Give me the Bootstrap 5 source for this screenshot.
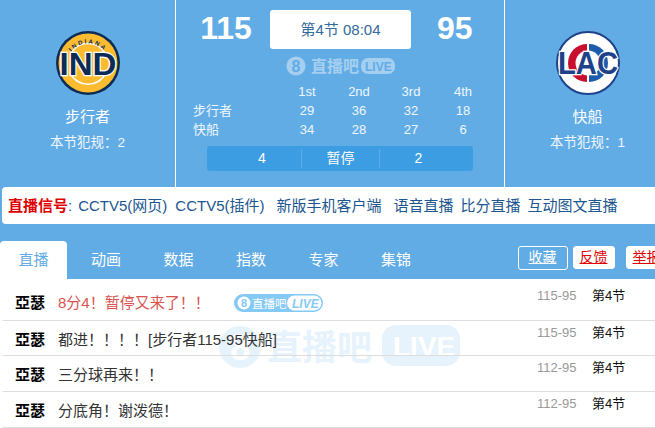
<!DOCTYPE html>
<html lang="zh">
<head>
<meta charset="utf-8">
<title>直播</title>
<link href="https://cdn.jsdelivr.net/npm/bootstrap@5.3.0/dist/css/bootstrap.min.css" rel="stylesheet">
<style>
html,body{width:655px;height:428px;overflow:hidden;margin:0;background:#fff}
body{font-family:"Liberation Sans","Noto Sans CJK SC",sans-serif;font-size:14px;line-height:1.2;color:#333}
.page-wrap{width:680px}
.top-blue{background:#62ace6}
.score-head{height:187px}
.side-team{width:175px;flex:none;color:#fff;padding-top:31px}
.side-team.away{width:165px}
.team-logo{display:block;width:64px;height:64px;margin:0 auto;overflow:visible}
.logo-letters{paint-order:stroke;stroke:#fff;stroke-width:2.4px;stroke-linejoin:miter}
.team-name{font-size:15px;line-height:18px;margin-top:13px}
.team-foul{font-size:13.5px;line-height:16px;margin-top:9px;color:#eef7ff}
.mid-panel{width:330px;flex:none;border-left:1px solid #fff;border-right:1px solid #fff;color:#fff}
.score-line{height:49px;padding-top:10px}
.big-num{font-size:32px;font-weight:700;line-height:36px;text-align:center}
.big-a{width:94px;padding-left:6px}
.big-b{width:62px;margin-left:26px;padding-left:0;flex:none;text-align:left}
.clock-box{width:141px;height:39px;background:#fff;border-radius:3px;color:#33699b;font-size:15px;line-height:39px;text-align:center}
.mark-small{display:block;width:110px;height:20px;margin:7px 0 0 110px;overflow:visible}
.quarter-grid{display:grid;grid-template-columns:88px 52px 52px 52px 52px;font-size:13px;line-height:19px;margin:6px 0 0 17px;color:#eef7ff}
.quarter-grid>span{text-align:center}
.quarter-grid>span.row-label{text-align:left}
.timeout-bar{width:266px;height:25px;margin:7px 0 0 31px;padding:3px 16px;background:#3d9de2;border-radius:3px;font-size:14px;line-height:19px}
.timeout-bar>span{width:78px;text-align:center}
.timeout-bar>span+span{border-left:1px solid #5aaee8}
.signal-strip{height:37px;margin-left:2px;background:#fff;border-radius:4px 0 0 4px;padding-left:6px;font-size:15px;line-height:37px;white-space:nowrap}
.signal-strip b{color:#e00000}
.signal-strip a{color:#20568f;text-decoration:none;margin-right:7px}
.signal-strip a.wide-gap{margin-right:12px}
.signal-strip a.first-link{margin-right:8px}
.signal-colon{color:#20568f;margin-right:6px}
.tab-row{height:55px;padding-top:17px}
.tab-cell{width:67px;height:38px;margin-right:5.5px;color:#fff;font-size:15px;line-height:38px;text-align:center;border-radius:4px 4px 0 0;flex:none}
.tab-cell.is-active{background:#fff;color:#62ace6}
.action-zone{margin-left:82.5px;padding-top:5px;gap:5px}
.tab-btn{display:block;flex:none;height:23px;line-height:21px;font-size:14px;border-radius:3px;text-align:center}
.tab-btn.ghost{width:50px;border:1px solid #fff;color:#fff;height:24px}
.tab-btn.solid{width:42px;background:#fff;color:#e00000;border:1px solid #fff}
.tab-btn.last-btn{margin-left:6px}
.feed-wrap{position:relative}
.feed-mark{position:absolute;left:218px;top:46px;width:244px;height:44px;z-index:0;overflow:visible}
.feed-row{position:relative;z-index:1;margin-left:3px;border-bottom:1px solid #ddd;height:36px;padding-left:12px;display:flex}
.feed-row.first-row{height:42px;padding-top:5px}
.feed-row.second-row{height:35px}
.feed-name{width:43px;font-size:15px;font-weight:700;color:#000;line-height:38px}
.feed-msg{width:479px;font-size:15px;line-height:38px;height:38px;color:#333;display:flex;align-items:center}
.feed-msg.is-hot{color:#d9534f}
.feed-score{width:55px;font-size:13px;color:#999;line-height:24px}
.feed-per{font-size:13px;color:#111;line-height:24px}
.feed-badge{width:89px;height:20px;margin-left:24px;flex:none}
</style>
</head>
<body>
<div class="page-wrap">
  <div class="top-blue">
    <div class="score-head d-flex">
      <div class="side-team text-center">
        <svg class="team-logo" viewBox="0 0 64 64">
          <defs><path id="ind-arc" d="M12 27A21 21 0 0 1 52 27"/></defs>
          <circle cx="32" cy="32" r="32" fill="#0c2c56"/>
          <circle cx="32" cy="32" r="29.5" fill="#fdbb30"/>
          <path d="M14 42A20 20 0 0 0 50 42" fill="none" stroke="#fff" stroke-width="1.6"/>
          <path d="M15 22A20 20 0 0 1 49 22" fill="none" stroke="#fff" stroke-width="1.6"/>
          <text font-family="Liberation Sans" font-size="6" font-weight="700" fill="#0c2c56" letter-spacing="1.9"><textPath href="#ind-arc" startOffset="7">INDIANA</textPath></text>
          <text class="logo-letters" x="32" y="44" text-anchor="middle" font-family="Liberation Sans" font-size="31" font-weight="700" fill="#0c2c56" textLength="57" lengthAdjust="spacingAndGlyphs">IND</text>
        </svg>
        <div class="team-name">步行者</div>
        <div class="team-foul">本节犯规：2</div>
      </div>
      <div class="mid-panel">
        <div class="score-line d-flex">
          <div class="big-num big-a">115</div>
          <div class="clock-box">第4节 08:04</div>
          <div class="big-num big-b">95</div>
        </div>
        <svg class="mark-small" viewBox="0 0 110 20">
          <g opacity=".42" fill="#fff">
            <circle cx="10" cy="10" r="9.5"/>
            <text x="10" y="15.5" text-anchor="middle" font-family="Liberation Sans" font-size="16" font-weight="700" fill="#62ace6">8</text>
            <text x="25" y="15.5" font-family="Noto Sans CJK SC" font-size="16" font-weight="700">直播吧</text>
            <rect x="75" y="2" width="34" height="16" rx="7"/>
            <text x="79" y="14.5" font-family="Liberation Sans" font-size="12" font-weight="700" fill="#62ace6">LIVE</text>
          </g>
        </svg>
        <div class="quarter-grid">
          <span></span><span>1st</span><span>2nd</span><span>3rd</span><span>4th</span>
          <span class="row-label">步行者</span><span>29</span><span>36</span><span>32</span><span>18</span>
          <span class="row-label">快船</span><span>34</span><span>28</span><span>27</span><span>6</span>
        </div>
        <div class="timeout-bar d-flex">
          <span>4</span><span>暂停</span><span>2</span>
        </div>
      </div>
      <div class="side-team away text-center">
        <svg class="team-logo" viewBox="0 0 64 64">
          <circle cx="32" cy="32" r="31" fill="#fff" stroke="#1d428a" stroke-width="2"/>
          <path d="M31 13a19 19 0 0 0 0 38Z" fill="#c8102e"/>
          <path d="M33 13a19 19 0 0 1 0 38Z" fill="#1d5cab"/>
          <circle cx="32" cy="32" r="12.5" fill="#fff"/>
          <text class="logo-letters" x="32" y="43" text-anchor="middle" font-family="Liberation Sans" font-size="31" font-weight="700" fill="#1d428a" textLength="60" lengthAdjust="spacingAndGlyphs">LAC</text>
        </svg>
        <div class="team-name">快船</div>
        <div class="team-foul">本节犯规：1</div>
      </div>
    </div>
    <div class="signal-strip">
      <b>直播信号</b><span class="signal-colon">:</span><a href="#" class="first-link">CCTV5(网页)</a><a href="#" class="wide-gap">CCTV5(插件)</a><a href="#" class="wide-gap">新版手机客户端</a><a href="#">语音直播</a><a href="#">比分直播</a><a href="#">互动图文直播</a>
    </div>
    <div class="tab-row d-flex">
      <div class="tab-cell is-active">直播</div>
      <div class="tab-cell">动画</div>
      <div class="tab-cell">数据</div>
      <div class="tab-cell">指数</div>
      <div class="tab-cell">专家</div>
      <div class="tab-cell">集锦</div>
      <div class="action-zone d-flex">
        <a class="tab-btn ghost">收藏</a>
        <a class="tab-btn solid">反馈</a>
        <a class="tab-btn solid last-btn">举报</a>
      </div>
    </div>
  </div>
  <div class="feed-wrap">
    <svg class="feed-mark" viewBox="0 0 244 44">
      <g fill="#e7f3fc">
        <circle cx="22" cy="22" r="21"/>
        <text x="22" y="35" text-anchor="middle" font-family="Liberation Sans" font-size="36" font-weight="700" fill="#fff">8</text>
        <text x="49" y="35" font-family="Noto Sans CJK SC" font-size="35" font-weight="700">直播吧</text>
        <rect x="164" y="0" width="78" height="41" rx="14"/>
        <text x="175" y="31" font-family="Liberation Sans" font-size="28" font-weight="700" fill="#fff">LIVE</text>
      </g>
    </svg>
    <div class="feed-row first-row">
      <div class="feed-name">亞瑟</div>
      <div class="feed-msg is-hot">8分4！暂停又来了！！<svg class="feed-badge" viewBox="0 0 89 20">
          <rect x="0" y="1" width="89" height="18" rx="9" fill="#85c9f5"/>
          <circle cx="10" cy="10" r="6.5" fill="#fff"/>
          <text x="10" y="14" text-anchor="middle" font-family="Liberation Sans" font-size="11" font-weight="700" fill="#85c9f5">8</text>
          <text x="18" y="14.5" font-family="Noto Sans CJK SC" font-size="11.5" fill="#fff">直播吧</text>
          <rect x="53" y="2.5" width="34.5" height="15" rx="7.5" fill="#fff"/>
          <text x="58" y="14.5" font-family="Liberation Sans" font-size="12" font-weight="700" font-style="italic" fill="#85c9f5">LIVE</text>
        </svg></div>
      <div class="feed-score">115-95</div>
      <div class="feed-per">第4节</div>
    </div>
    <div class="feed-row second-row">
      <div class="feed-name">亞瑟</div>
      <div class="feed-msg">都进！！！！[步行者115-95快船]</div>
      <div class="feed-score">115-95</div>
      <div class="feed-per">第4节</div>
    </div>
    <div class="feed-row">
      <div class="feed-name">亞瑟</div>
      <div class="feed-msg">三分球再来！！</div>
      <div class="feed-score">112-95</div>
      <div class="feed-per">第4节</div>
    </div>
    <div class="feed-row">
      <div class="feed-name">亞瑟</div>
      <div class="feed-msg">分底角！谢泼德！</div>
      <div class="feed-score">112-95</div>
      <div class="feed-per">第4节</div>
    </div>
  </div>
</div>
</body>
</html>
